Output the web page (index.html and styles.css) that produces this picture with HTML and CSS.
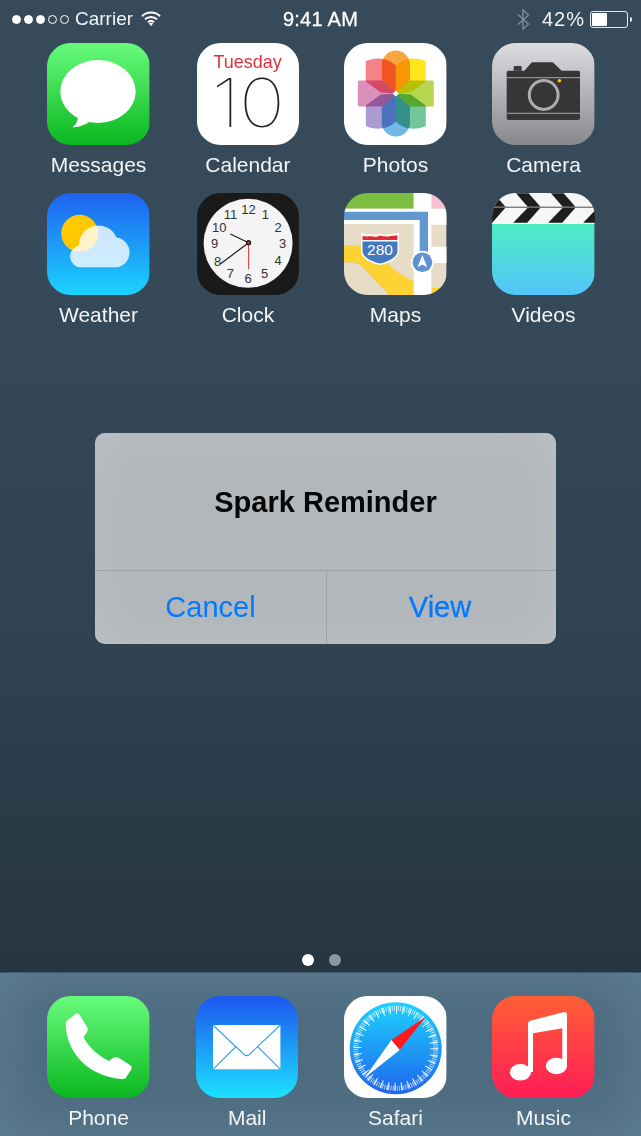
FILE: index.html
```html
<!DOCTYPE html>
<html lang="en">
<head>
<meta charset="utf-8">
<title>Home Screen</title>
<link rel="stylesheet" href="styles.css">
</head>
<body>
<div class="screen">
  <header class="status">
    <div class="status-left">
      <div class="signal"><i class="dot on"></i><i class="dot on"></i><i class="dot on"></i><i class="dot"></i><i class="dot"></i></div>
      <span class="carrier">Carrier</span>
      <svg class="wifi" viewBox="0 0 20 15" width="20" height="15"><path class="wifi-arc" d="M1 5.2C6 .4 14 .4 19 5.2M4 8.3c3.4-3.2 8.6-3.2 12 0M7 11.2c1.7-1.5 4.3-1.5 6 0"/><path class="wifi-tip" d="M10 15l-2.2-2.4c1.3-1 3.1-1 4.4 0z"/></svg>
    </div>
    <div class="time">9:41 AM</div>
    <div class="status-right">
      <svg class="bt" viewBox="0 0 13 21" width="13" height="21"><path d="M1 5.5L11.5 15 6 20V1l5.5 5L1 15.500"/></svg>
      <span class="pct">42%</span>
      <div class="battery"><div class="battery-fill"></div></div>
      <div class="battery-tip"></div>
    </div>
  </header>

  <main class="home">
    <section class="apps">
      <div class="app">
        <svg class="icon" viewBox="0 0 102.4 102.4"><defs><linearGradient id="gMsg" x1="0" y1="0" x2="0" y2="1"><stop offset="0" stop-color="#68fb7c"/><stop offset="1" stop-color="#09b71f"/></linearGradient></defs><rect width="102.4" height="102.4" fill="url(#gMsg)"/><ellipse cx="51" cy="48.5" rx="37.7" ry="31.5" fill="#fff"/><path d="M30 71L31 75C30.5 79 28 82.500 25.400 84.300C31 84.300 38 82 43 78.500Z" fill="#fff"/></svg>
        <span class="label">Messages</span>
      </div>
      <div class="app">
        <svg class="icon" viewBox="0 0 102.4 102.4"><rect width="102.4" height="102.4" fill="#fff"/><text class="cal-day" x="50.6" y="25">Tuesday</text><text class="cal-num" transform="translate(50.600 84.300) scale(1.16 1)">10</text></svg>
        <span class="label">Calendar</span>
      </div>
      <div class="app">
        <svg class="icon" viewBox="0 0 102.4 102.4"><rect width="102.4" height="102.4" fill="#fff"/><g transform="translate(51.8 50.6)" class="petals">
          <path fill="#f9a63e" d="M0 0L-14-14V-30.500A14.200 14.200 0 0 1 14.200-30.500V-14Z"/>
          <path fill="#ffe61c" d="M0 0V-28C8-36 20-37 30-32.500V-12L15-1Z"/>
          <path fill="#b8d650" d="M0 0L13-13H36.500A1.500 1.500 0 0 1 38-11.500V11.500A1.500 1.500 0 0 1 36.500 13H13Z"/>
          <path fill="#74c79b" d="M0 0V28C8 36 20 37 30 32.500V12L15 1Z"/>
          <path fill="#72b9e8" d="M0 0L-14 14V30.500A14.200 14.200 0 0 0 14.200 30.500V14Z"/>
          <path fill="#ab9bd2" d="M0 0V28C-8 36-20 37-30 32.500V12L-15 1Z"/>
          <path fill="#dc8fbb" d="M0 0L-13-13H-36.500A1.500 1.500 0 0 0-38-11.500V11.500A1.500 1.500 0 0 0-36.500 13H-13Z"/>
          <path fill="#f68288" d="M0 0V-28C-8-36-20-37-30-32.500V-12L-15-1Z"/>
        </g><path d="M51.800 47.600L55 50.600L51.800 53.600L48.600 50.600Z" fill="#fff"/></svg>
        <span class="label">Photos</span>
      </div>
      <div class="app">
        <svg class="icon" viewBox="0 0 102.4 102.4"><defs><linearGradient id="gCam" x1="0" y1="0" x2="0" y2="1"><stop offset="0" stop-color="#dcdde0"/><stop offset="1" stop-color="#87888c"/></linearGradient></defs><rect width="102.4" height="102.4" fill="url(#gCam)"/><path d="M21.7 27.7V24a1 1 0 0 1 1-1h6a1 1 0 0 1 1 1v3.7z" fill="#3a3a3a"/><path d="M16.2 27.7H32.4L39 20.3a2.5 2.5 0 0 1 1.8-1H60a2.5 2.5 0 0 1 1.8 1L69.7 27.7H86.5a1.5 1.5 0 0 1 1.5 1.5V75a2 2 0 0 1-2 2H16.7a2 2 0 0 1-2-2V29.2a1.5 1.5 0 0 1 1.5-1.500z" fill="#363636"/><path d="M14.700 34.700H88M14.700 70.300H88" stroke="#a5a5a8" stroke-width="1"/><circle cx="51.7" cy="52" r="14.400" fill="#363636" stroke="#adadae" stroke-width="3"/><circle cx="67.4" cy="37.7" r="1.800" fill="#ffc20e"/></svg>
        <span class="label">Camera</span>
      </div>
      <div class="app">
        <svg class="icon" viewBox="0 0 102.4 102.4"><defs><linearGradient id="gWea" x1="0" y1="0" x2="0" y2="1"><stop offset="0" stop-color="#1e62ef"/><stop offset="1" stop-color="#1bd3ff"/></linearGradient></defs><rect width="102.4" height="102.4" fill="url(#gWea)"/><circle cx="32.700" cy="40.300" r="18.500" fill="#ffc800"/><path d="M34 74.300A11 11 0 0 1 32 52.500A19.500 19.500 0 0 1 69.500 44.500A15.200 15.200 0 0 1 71 74.300Z" fill="#fff" fill-opacity=".78"/></svg>
        <span class="label">Weather</span>
      </div>
      <div class="app">
        <svg class="icon" viewBox="0 0 102.4 102.4"><rect width="102.4" height="102.4" fill="#1a1a1a"/><circle cx="51.100" cy="50.300" r="44.500" fill="#f4f4f4"/><g class="clock-nums"><text x="51.600" y="20.800">12</text><text x="68.300" y="25.800">1</text><text x="81" y="38.800">2</text><text x="85.600" y="54.800">3</text><text x="81" y="72.500">4</text><text x="67.600" y="84.800">5</text><text x="51" y="89.800">6</text><text x="33.300" y="84.800">7</text><text x="20.600" y="73.200">8</text><text x="17.600" y="54.800">9</text><text x="22.300" y="38.800">10</text><text x="33.600" y="25.800">11</text></g><path d="M51.600 49.700L33.300 41M51.600 49.700L23.300 71" stroke="#1a1a1a" stroke-width="1.100" fill="none"/><path d="M51.600 49.700V76.300" stroke="#e0363c" stroke-width="1"/><circle cx="51.600" cy="49.700" r="2.600" fill="#1a1a1a"/><circle cx="51.600" cy="49.700" r="1.300" fill="#e0363c"/></svg>
        <span class="label">Clock</span>
      </div>
      <div class="app">
        <svg class="icon" viewBox="0 0 102.4 102.4"><rect width="102.4" height="102.400" fill="#e6dcc8"/><path d="M0 52C8 52 14 53 19 53.700C28 55 32 56 35.700 60.300C41 66 45 73 50.700 77C56 81 63 85 70 88.700V102.400H46C41 97 35 91 29 85C22 78 18 71 12.400 70C8 69 4 69 0 68.700Z" fill="#fdd334"/><path d="M0 68.700C4 69 8 69 12.400 70C18 71 22 78 29 85C35 91 41 97 46 102.400" stroke="#f3bd57" stroke-width=".7" fill="none"/><path d="M87 95H102.400V102.400H87Z" fill="#fdd334"/><rect width="69.700" height="15.700" fill="#7cbe3f"/><rect x="87.400" width="15" height="15.700" fill="#f7bfd1"/><path d="M69.700 0H87.400V15.700H102.400V31.700H87.400V53.700H102.400V70H87.400V102.400H69.700V31H0V15.700H69.700Z" fill="#fff"/><path d="M0 18.700H84V65H75.700V27H0Z" fill="#6398cf"/><circle cx="78.400" cy="69.300" r="11.500" fill="#fff"/><circle cx="78.400" cy="69.300" r="9.800" fill="#5f93cf"/><path d="M78.400 62L83.200 74.200L78.400 71.600L73.600 74.200Z" fill="#fff"/><path d="M17 39.500C20 41.500 23 40.500 26 41.300C29 42 33 42 36 40.500C40 42.500 44 41.500 47 41C50 40.500 52 41 55 39.500V58C55 65 46 70 36 72C26 70 17 65 17 58Z" fill="#fff"/><path d="M18.500 43C22 44 26 42.800 29 43.600C32 44 34 43.600 36 42.500C40 44 44 43.600 47 43C50 42.600 52 43 53.500 42.300V47H18.500Z" fill="#df2c35"/><path d="M18.500 48.500H53.500V58C53.500 64 45 68.600 36 70.500C27 68.600 18.500 64 18.500 58Z" fill="#4279bf"/><text class="shield" x="36" y="62.500">280</text></svg>
        <span class="label">Maps</span>
      </div>
      <div class="app">
        <svg class="icon" viewBox="0 0 102.4 102.4"><defs><linearGradient id="gVid" x1="0" y1="0" x2="0" y2="1"><stop offset="0" stop-color="#4decc2"/><stop offset="1" stop-color="#54c4fb"/></linearGradient></defs><rect width="102.4" height="72.4" fill="url(#gVid)" y="30"/><rect width="102.4" height="31" fill="#f6f6f6"/><g fill="#1e1e1e"><path d="M-11 .3H1.700L13.400 13.700H.7ZM.7 14.700H13.400L.2 29.700H-13.800Z"/><path d="M24 .3H36.700L48.400 13.700H35.700ZM35.700 14.700H48.400L35.200 29.700H21.200Z"/><path d="M59 .3H71.700L83.400 13.700H70.700ZM70.700 14.700H83.400L70.200 29.700H56.200Z"/><path d="M94 .3H106.700L118.400 13.700H105.700ZM105.700 14.700H118.400L105.200 29.700H91.200Z"/></g><rect y="13.700" width="102.400" height="1" fill="#4a4a4a"/></svg>
        <span class="label">Videos</span>
      </div>
    </section>

    <div class="pager"><i class="page on"></i><i class="page"></i></div>

    <div class="alert" role="dialog">
      <div class="alert-title">Spark Reminder</div>
      <div class="alert-actions">
        <div class="alert-btn">Cancel</div>
        <div class="alert-btn primary">View</div>
      </div>
    </div>
  </main>

  <footer class="dock">
    <div class="app">
      <svg class="icon" viewBox="0 0 102.4 102.4"><defs><linearGradient id="gPho" x1="0" y1="0" x2="0" y2="1"><stop offset="0" stop-color="#68fb7c"/><stop offset="1" stop-color="#09b71f"/></linearGradient></defs><rect width="102.4" height="102.4" fill="url(#gPho)"/><path d="M29 17.500C31 17 32 18 33 19.500L40 31C41 33 41 35 39.500 37L36.500 41C42 52 52 60 62 65L66 62C68 61 70 61 72 62L83 69C85 70.500 85 72 84 74L79 81.500C78 83 76 83.500 74 83C42 80 20 58 18.700 29C18.500 27 19 25 21 24Z" fill="#fff"/></svg>
      <span class="label">Phone</span>
    </div>
    <div class="app">
      <svg class="icon" viewBox="0 0 102.4 102.4"><defs><linearGradient id="gMail" x1="0" y1="0" x2="0" y2="1"><stop offset="0" stop-color="#1d55ee"/><stop offset="1" stop-color="#1de2ff"/></linearGradient></defs><rect width="102.4" height="102.4" fill="url(#gMail)"/><rect x="17" y="29" width="67.400" height="44.300" fill="#fff"/><path d="M17 29L48 58.500C49.700 60 51.700 60 53.400 58.500L84.400 29M17 73.300L39.500 51M84.400 73.300L62 51" fill="none" stroke="#2fa4f2" stroke-width="1.100"/></svg>
      <span class="label">Mail</span>
    </div>
    <div class="app">
      <svg class="icon" viewBox="0 0 102.4 102.4"><defs><linearGradient id="gSaf" x1="0" y1="0" x2="0" y2="1"><stop offset="0" stop-color="#1ed2fc"/><stop offset="1" stop-color="#1d66ee"/></linearGradient></defs><rect width="102.4" height="102.4" fill="#fff"/><circle cx="51.700" cy="52.300" r="46" fill="url(#gSaf)"/><circle class="tick-fine" cx="51.700" cy="52.300" r="40"/><circle class="tick-long" cx="51.700" cy="52.300" r="38.500"/><path d="M81.700 20.700L55.700 54L47.400 44Z" fill="#ff1a1e"/><path d="M20.700 81.700L47.400 44L55.700 54Z" fill="#fff"/></svg>
      <span class="label">Safari</span>
    </div>
    <div class="app">
      <svg class="icon" viewBox="0 0 102.4 102.4"><defs><linearGradient id="gMus" x1="0" y1="0" x2="0" y2="1"><stop offset="0" stop-color="#ff5e36"/><stop offset="1" stop-color="#ff1d57"/></linearGradient></defs><rect width="102.4" height="102.4" fill="url(#gMus)"/><path d="M36 28C36 26 37 25 39 24.500L72 16C74 15.600 75 16.500 75 18.500V70H70.300V32.300L41 37.300V76H36Z" fill="#fff"/><ellipse cx="64.400" cy="70" rx="10.600" ry="8.300" fill="#fff"/><ellipse cx="28.400" cy="76.300" rx="10.600" ry="8.300" fill="#fff"/></svg>
      <span class="label">Music</span>
    </div>
  </footer>
</div>
</body>
</html>
```

FILE: styles.css
```css
* { box-sizing: border-box; }
html, body { margin: 0; padding: 0; }
body { background: #2b3d49; font-family: "Liberation Sans", Arial, sans-serif; color: #fff; }
.screen { width: 641px; height: 1136px; display: flex; flex-direction: column; overflow: hidden; background: linear-gradient(#364a5a 0, #364a5a 20%, #2f4351 55%, #263641 85%); }

.status { height: 40px; flex: none; display: grid; grid-template-columns: 1fr auto 1fr; align-items: center; padding: 0 12px 2px 12px; font-size: 19px; }
.status-left { display: flex; align-items: center; }
.signal { display: flex; gap: 3px; }
.dot { display: block; width: 9px; height: 9px; border-radius: 50%; border: 1px solid #fff; }
.dot.on { background: #fff; }
.carrier { margin-left: 6px; color: #f2f4f5; }
.wifi { margin-left: 8px; margin-top: -2px; }
.wifi-arc { fill: none; stroke: #fff; stroke-width: 2; }
.wifi-tip { fill: #fff; }
.time { font-size: 20px; letter-spacing: .25px; -webkit-text-stroke: .3px #fff; }
.status-right { display: flex; align-items: center; justify-content: flex-end; margin-right: -3px; }
.bt { margin-right: 12px; }
.bt path { fill: none; stroke: #7d8c97; stroke-width: 1.4; }
.pct { font-size: 20px; letter-spacing: 1px; color: #f2f4f5; margin-right: 5px; }
.battery { width: 38px; height: 17px; border: 1px solid #e6e9eb; border-radius: 3px; padding: 1px; }
.battery-fill { width: 15px; height: 100%; background: #fff; border-radius: 1px; }
.battery-tip { width: 2px; height: 5px; margin-left: 2px; background: #e6e9eb; border-radius: 0 2px 2px 0; }

.home { flex: 1; position: relative; display: flex; flex-direction: column; }
.apps { display: grid; grid-template-columns: 148px 150.8px 144.4px 151.6px; grid-auto-rows: 150px; padding: 3px 0 0 24.5px; }
.app { display: flex; flex-direction: column; align-items: center; }
.icon { display: block; width: 102.4px; height: 102.4px; flex: none; border-radius: 23.5px; overflow: hidden; }
.label { font-size: 21px; line-height: 40px; white-space: nowrap; color: #f3f5f6; }

.cal-day { font-size: 18px; fill: #e0313c; text-anchor: middle; font-family: "Liberation Sans", sans-serif; }
.cal-num { font-size: 67px; font-weight: 100; letter-spacing: -1px; fill: #222; text-anchor: middle; font-family: Inter, sans-serif; }
.petals path { mix-blend-mode: multiply; }
.clock-nums text { font-size: 13px; fill: #333; text-anchor: middle; font-family: "Liberation Sans", sans-serif; }
.shield { font-size: 15.500px; fill: #fff; text-anchor: middle; font-family: "Liberation Sans", sans-serif; }
.tick-fine { fill: none; stroke: #fff; stroke-opacity: .7; stroke-width: 5; stroke-dasharray: .9 1.194; }
.tick-long { fill: none; stroke: #fff; stroke-opacity: .85; stroke-width: 8; stroke-dasharray: 1.2 5.52; }

.pager { margin-top: auto; margin-bottom: 6px; display: flex; justify-content: center; gap: 15px; padding-left: 1px; }
.page { display: block; width: 12px; height: 12px; border-radius: 50%; background: #8d979e; }
.page.on { background: #fff; }

.alert { position: absolute; left: 95px; top: 393px; width: 461px; height: 211px; border-radius: 10px; background: #b2b7bb; box-shadow: inset 0 0 50px #bcc1c5; display: flex; flex-direction: column; overflow: hidden; }
.alert-title { height: 137px; display: flex; align-items: center; justify-content: center; padding-top: 2px; font-size: 29px; font-weight: 700; color: #050505; }
.alert-actions { flex: 1; display: grid; grid-template-columns: 231px 230px; border-top: 1px solid #9da2a6; }
.alert-btn { display: flex; align-items: center; justify-content: center; font-size: 29px; color: #007aff; }
.alert-btn.primary { border-left: 1px solid #9da2a6; padding-right: 3px; -webkit-text-stroke: .3px #007aff; }

.dock { flex: none; height: 164px; display: grid; grid-template-columns: 148px 149.4px 147.2px 148.8px; padding: 23px 0 0 24.5px; background: #4e6c80; box-shadow: inset 0 0 60px #5f8096; border-top: 1px solid #41596b; }
```
